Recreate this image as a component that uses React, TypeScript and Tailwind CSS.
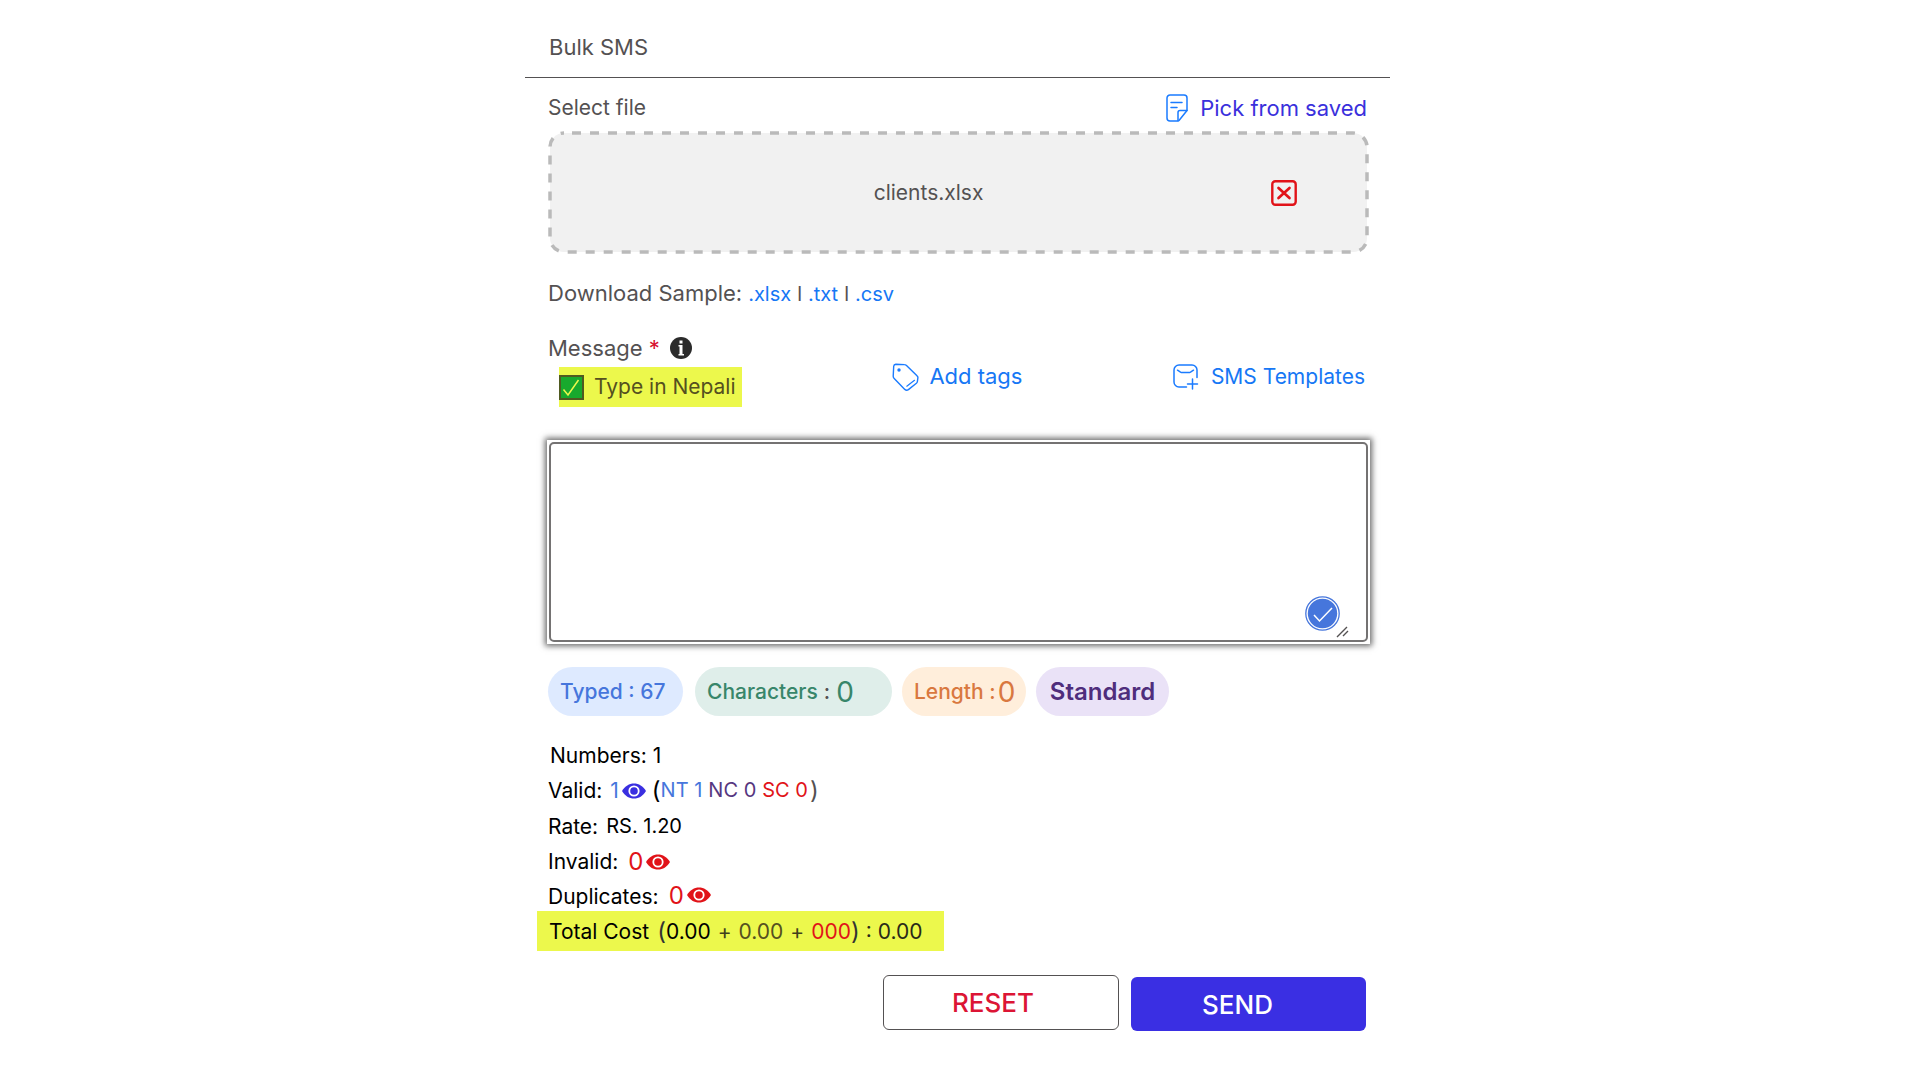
import React from "react";

function NoteIcon() {
  return (
    <svg width="22" height="28" viewBox="0 0 22 28" fill="none" stroke="#1a7bff" strokeWidth="1.5" strokeLinejoin="round" strokeLinecap="round" aria-hidden="true">
      <path d="M12 27H4a3 3 0 0 1-3-3V4a3 3 0 0 1 3-3h14a3 3 0 0 1 3 3v12.500L13 26.500a2 2 0 0 1-1 .5z" />
      <path d="M12 26.500V18.500a2 2 0 0 1 2-2h7M5 8.500h11M5 13.500h6" />
    </svg>
  );
}

function TagIcon() {
  return (
    <svg width="27" height="28" viewBox="0 0 27 28" fill="none" stroke="#1a7bff" strokeWidth="1.400" strokeLinejoin="round" strokeLinecap="round" aria-hidden="true">
      <path d="M3.800 1.200L12.500 1.600a3 3 0 0 1 2 .8L25 12.800a2 2 0 0 1 .9 1.900l-.5 3.800a3 3 0 0 1-1 1.800l-8 6.300a3 3 0 0 1-3.600-.2L2.200 15.500a3 3 0 0 1-1-2.200L1.700 3.300a2.300 2.300 0 0 1 2.100-2.100z" />
      <path d="M14.800 23.200l7.700-5.900" strokeWidth="1.200" />
      <circle cx="7" cy="7" r="1.700" fill="#1a7bff" stroke="none" />
    </svg>
  );
}

function TemplateIcon() {
  return (
    <svg width="26" height="26" viewBox="0 0 26 26" fill="none" stroke="#1a7bff" strokeWidth="1.500" strokeLinecap="round" aria-hidden="true">
      <path d="M24 13.500V6a5 5 0 0 0-5-5H6a5 5 0 0 0-5 5v12a5 5 0 0 0 5 5h7.500" />
      <path d="M4.500 6.200l3 1.900a4 4 0 0 0 2 .5h6a4 4 0 0 0 2-.5l3-1.900M19.500 15v10M14.500 20h10" />
    </svg>
  );
}

function EyeIcon({ color }: { color: string }) {
  return (
    <svg width="24" height="16" viewBox="0 0 24 16" aria-hidden="true">
      <path d="M0 8C3 3 7.200.5 12 .5S21 3 24 8c-3 5-7.200 7.500-12 7.500S3 13 0 8z" fill={color} />
      <circle cx="12" cy="8" r="4.700" fill="none" stroke="#fff" strokeWidth="1.800" />
    </svg>
  );
}

function CloseIcon() {
  return (
    <svg width="26" height="26" viewBox="0 0 26 26" fill="none" stroke="#e11319" strokeWidth="2.400" strokeLinecap="round" aria-hidden="true">
      <rect x="1.300" y="1.300" width="23.400" height="23.400" rx="3" />
      <path d="M7.500 8l11 10M18.500 8l-11 10" strokeWidth="2.700" />
    </svg>
  );
}

export default function App() {
  return (
    <main className="flex justify-center bg-white pr-[7px] font-['Inter',sans-serif] text-[21px] text-[#545152]">
      <div className="w-full max-w-[865px]">
        <h1 className="px-6 pt-8 pb-[15px] text-[22px] leading-[30px]">Bulk SMS</h1>
        <hr className="border-t border-[#545152]" />

        <form className="pr-[21px] pl-[23px]">
          <div className="flex h-[53px] items-center justify-between pr-[2px] pt-[7px]">
            <span id="file-label">Select file</span>
            <button type="button" className="flex items-center gap-3 text-[22px] text-[#3a30dc]">
              <NoteIcon />
              Pick from saved
            </button>
          </div>

          <section aria-labelledby="file-label" className="relative flex h-[123px] items-center justify-center">
            <svg className="absolute inset-0 h-full w-full" aria-hidden="true">
              <rect x="2" y="2" rx="14" className="h-[calc(100%-4px)] w-[calc(100%-4px)]" fill="#f1f1f1" stroke="#bababa" strokeWidth="3.500" strokeDasharray="9 9" strokeDashoffset="-8" />
            </svg>
            <span className="relative mr-[60px]">clients.xlsx</span>
            <button type="button" aria-label="Remove file" className="absolute right-[72px]">
              <CloseIcon />
            </button>
          </section>

          <p className="mt-6 flex items-baseline gap-[6px] text-xl leading-[30px]">
            <span className="text-[22px] leading-[30px]">Download Sample:</span>
            <a href="#xlsx" className="text-[#1677f5]">.xlsx</a>
            <span>l</span>
            <a href="#txt" className="text-[#1677f5]">.txt</a>
            <span>l</span>
            <a href="#csv" className="text-[#1677f5]">.csv</a>
          </p>

          <div className="mt-6 flex items-start justify-between pr-1 text-[22px]">
            <div>
              <div className="flex h-[30px] items-center">
                <label htmlFor="message">
                  Message <span className="text-[#d8102f]">*</span>
                </label>
                <svg className="ml-[10px]" width="22" height="22" viewBox="0 0 22 22" aria-hidden="true">
                  <circle cx="11" cy="11" r="11" fill="#2b2b2b" />
                  <path d="M9.500 3.500h3v3h-3zM8.500 8h4v9h1.500v1.500H8.500V17h1V9.500h-1z" fill="#fff" />
                </svg>
              </div>
              <label className="mt-1 ml-[11px] flex h-10 w-[183px] items-center gap-[10px] bg-[#ecf84c] text-[21px] text-[#55501f]">
                <span className="grid shrink-0">
                  <input
                    type="checkbox"
                    defaultChecked
                    className="col-start-1 row-start-1 size-[25px] appearance-none border-2 border-[#4f5a20] bg-[#18a92d]"
                  />
                  <svg className="pointer-events-none col-start-1 row-start-1" width="25" height="25" viewBox="0 0 25 25" fill="none" stroke="#ecf84c" strokeWidth="1.500" aria-hidden="true">
                    <path d="M4.500 14.500l4.500 5.500L19.500 5" />
                  </svg>
                </span>
                <span className="whitespace-nowrap">Type in Nepali</span>
              </label>
            </div>
            <button type="button" className="mt-[27px] flex items-center gap-[10px] text-[#1677f5]">
              <TagIcon />
              Add tags
            </button>
            <button type="button" className="mt-[28px] flex items-center gap-3 text-[21px] text-[#1677f5]">
              <TemplateIcon />
              SMS Templates
            </button>
          </div>

          <div className="relative -mr-[1px] -ml-[1px] mt-[33px] bg-white p-[2px] shadow-[0_0_6px_2px_rgba(0,0,0,0.600)]">
            <textarea id="message" className="block h-[200px] w-full resize-none rounded-[5px] border-2 border-[#747272] bg-white p-3 outline-none" />
            <button type="button" aria-label="Confirm message" className="absolute right-[30px] bottom-[13px]">
              <svg width="35" height="35" viewBox="0 0 35 35" fill="none" aria-hidden="true">
                <circle cx="17.500" cy="17.500" r="16.700" stroke="#4676dc" strokeWidth="1.300" />
                <circle cx="17.500" cy="17.500" r="14.700" fill="#4676dc" />
                <path d="M9 19l5.500 6L27 12" stroke="#fff" strokeWidth="1.500" />
              </svg>
            </button>
            <svg className="pointer-events-none absolute right-[21px] bottom-[6px]" width="13" height="12" viewBox="0 0 13 12" stroke="#545152" strokeWidth="1.400" aria-hidden="true">
              <path d="M1 11L11 1M7 10l5-5" />
            </svg>
          </div>

          <div className="mt-[23px] flex h-[49px] font-medium">
            <div className="flex w-[135px] items-center rounded-full bg-[#deeaff] pl-3 text-[#4676dc]">Typed : 67</div>
            <div className="ml-3 flex w-[197px] items-center gap-[6px] rounded-full bg-[#dfeeea] pl-3 text-[#38866a]">
              Characters <span className="text-[#545152]">:</span>
              <span className="text-[28px] font-normal">0</span>
            </div>
            <div className="ml-[10px] flex w-[124px] items-center gap-[2px] rounded-full bg-[#ffeedb] pl-3 text-[#d9783f]">
              Length :<span className="text-[28px] font-normal">0</span>
            </div>
            <div className="ml-[10px] flex w-[133px] items-center justify-center rounded-full bg-[#eae2f7] text-[24px] font-semibold text-[#4f2d7c]">Standard</div>
          </div>

          <div className="mt-[22px] leading-[35px] text-black">
            <p className="pl-[2px]">Numbers: 1</p>
            <p className="flex h-[35px] items-center">
              Valid:<span className="ml-2 text-[#4676dc]">1</span>
              <button type="button" aria-label="View valid numbers" className="ml-[3px]">
                <EyeIcon color="#3a2fe0" />
              </button>
              <span className="ml-[6px] text-[24px]">(</span>
              <span className="text-xl leading-[35px] text-[#4676dc]">NT 1</span>
              <span className="ml-[6px] text-xl leading-[35px] text-[#563780]">NC 0</span>
              <span className="ml-[6px] text-xl leading-[35px] text-[#e11319]">SC 0</span>
              <span className="ml-[2px] text-[24px] text-[#545152]">)</span>
            </p>
            <p className="flex h-9 items-center gap-2">
              Rate: <span className="text-xl">RS. 1.20</span>
            </p>
            <p className="flex h-[35px] items-center">
              Invalid:<span className="ml-[10px] text-[24px] text-[#e11319]">0</span>
              <button type="button" aria-label="View invalid numbers" className="ml-[3px]">
                <EyeIcon color="#e11319" />
              </button>
            </p>
            <p className="flex h-8 items-center">
              <span className="pt-[2px]">Duplicates:</span>
              <span className="ml-[10px] text-[24px] text-[#e11319]">0</span>
              <button type="button" aria-label="View duplicate numbers" className="ml-[3px]">
                <EyeIcon color="#e11319" />
              </button>
            </p>
            <p className="-ml-[11px] flex h-10 w-[407px] items-center whitespace-nowrap bg-[#ecf84c] pl-3">
              Total Cost<span className="ml-2 text-[24px] text-[#333]">(</span>0.00
              <span className="mx-[7px] text-[#40401c]">+</span>
              <span className="text-[#55501f]">0.00</span>
              <span className="mx-[7px] text-[#40401c]">+</span>
              <span className="text-[#e11319]">000</span>
              <span className="text-[24px] text-[#333]">)</span>
              <span className="ml-[6px] text-[#292918]">: 0.00</span>
            </p>
          </div>

          <div className="mt-6 flex justify-end gap-3 pr-[3px] text-[26px] font-medium">
            <button type="reset" className="h-[55px] w-[236px] rounded-md border border-[#545152] bg-white pr-4 text-[#dc1535]">
              RESET
            </button>
            <button type="button" className="mt-[2px] h-[54px] w-[235px] rounded-md bg-[#3a2fe3] pr-[22px] text-white">
              SEND
            </button>
          </div>
        </form>
      </div>
    </main>
  );
}
